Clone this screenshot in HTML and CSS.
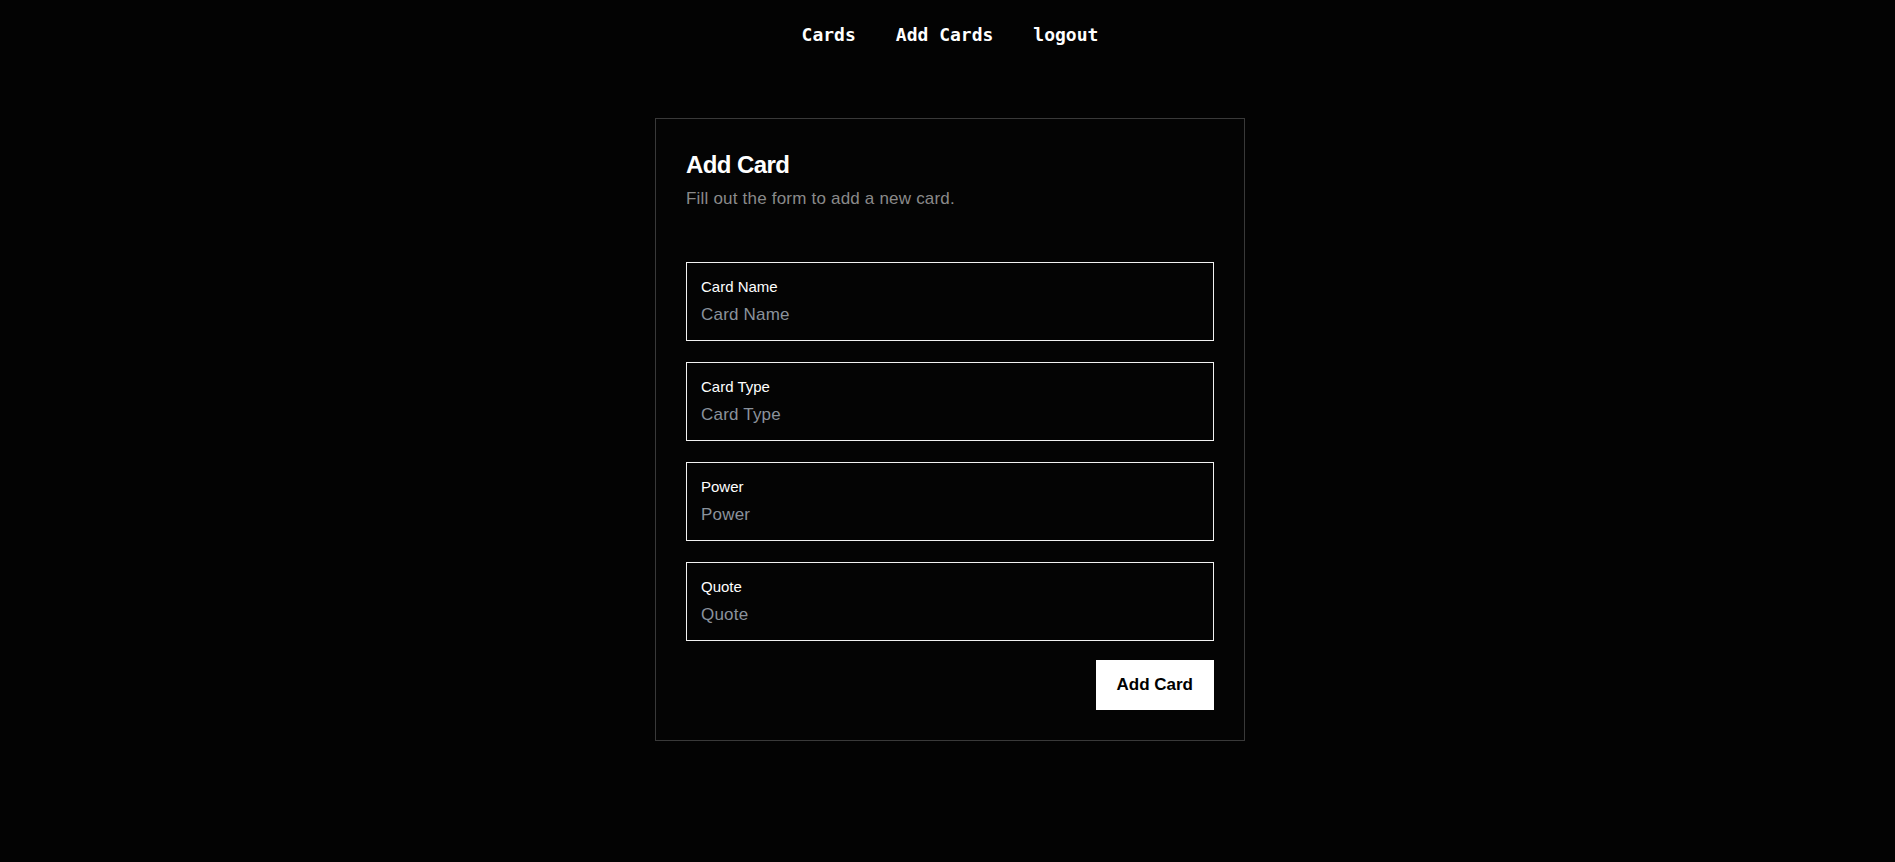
FILE: index.html
```html
<!DOCTYPE html>
<html lang="en">
<head>
<meta charset="utf-8">
<title>Add Card</title>
<link rel="stylesheet" href="styles.css">
</head>
<body>
<nav class="nav">
  <a class="nav-link" href="#">Cards</a>
  <a class="nav-link" href="#">Add Cards</a>
  <a class="nav-link" href="#">logout</a>
</nav>
<main class="main">
  <section class="card">
    <header class="card-header">
      <h1 class="card-title">Add Card</h1>
      <p class="card-desc">Fill out the form to add a new card.</p>
    </header>
    <form class="form">
      <div class="fields">
        <label class="field">
          <span class="field-label">Card Name</span>
          <input class="field-input" type="text" placeholder="Card Name">
        </label>
        <label class="field">
          <span class="field-label">Card Type</span>
          <input class="field-input" type="text" placeholder="Card Type">
        </label>
        <label class="field">
          <span class="field-label">Power</span>
          <input class="field-input" type="text" placeholder="Power">
        </label>
        <label class="field">
          <span class="field-label">Quote</span>
          <input class="field-input" type="text" placeholder="Quote">
        </label>
      </div>
      <div class="actions">
        <button class="btn" type="button">Add Card</button>
      </div>
    </form>
  </section>
</main>
</body>
</html>
```

FILE: styles.css
```css
* { box-sizing: border-box; }

html, body {
  margin: 0;
  background: #030303;
}

body {
  padding-left: 5px;
  font-family: "Liberation Sans", Arial, sans-serif;
  color: #fff;
  min-height: 862px;
}

.nav {
  height: 70px;
  display: flex;
  justify-content: center;
  align-items: center;
  gap: 40px;
}

.nav-link {
  font-family: "DejaVu Sans Mono", "Liberation Mono", monospace;
  font-weight: bold;
  font-size: 18px;
  line-height: 24px;
  color: #fff;
  text-decoration: none;
}

.main {
  display: flex;
  justify-content: center;
  padding-top: 48px;
}

.card {
  width: 590px;
  border: 1px solid #393939;
  background: #040404;
  padding: 30px;
}

.card-header {
  display: flex;
  flex-direction: column;
  gap: 6px;
}

.card-title {
  margin: 0;
  font-size: 24px;
  line-height: 32px;
  font-weight: bold;
  letter-spacing: -0.025em;
}

.card-desc {
  margin: 0;
  font-size: 17px;
  line-height: 24px;
  letter-spacing: 0.2px;
  color: #8a8a8a;
}

.form {
  margin-top: 51px;
}

.fields {
  display: flex;
  flex-direction: column;
  gap: 21px;
}

.field {
  display: flex;
  flex-direction: column;
  gap: 6px;
  border: 1px solid #f2f2f2;
  padding: 14px 14px 13px;
}

.field-label {
  font-size: 15px;
  line-height: 20px;
  color: #fff;
}

.field-input {
  display: block;
  width: 100%;
  height: 24px;
  margin: 0;
  padding: 0;
  border: 0;
  outline: none;
  background: transparent;
  font-family: "Liberation Sans", Arial, sans-serif;
  font-size: 17px;
  line-height: 24px;
  letter-spacing: 0.2px;
  color: #fff;
}

.field-input::placeholder {
  color: #8a929c;
  opacity: 1;
}

.actions {
  display: flex;
  justify-content: flex-end;
  margin-top: 19px;
}

.btn {
  height: 50px;
  padding: 0 21px;
  border: 0;
  border-radius: 0;
  background: #fff;
  color: #000;
  font-family: "Liberation Sans", Arial, sans-serif;
  font-weight: bold;
  font-size: 17px;
  cursor: pointer;
}
```
